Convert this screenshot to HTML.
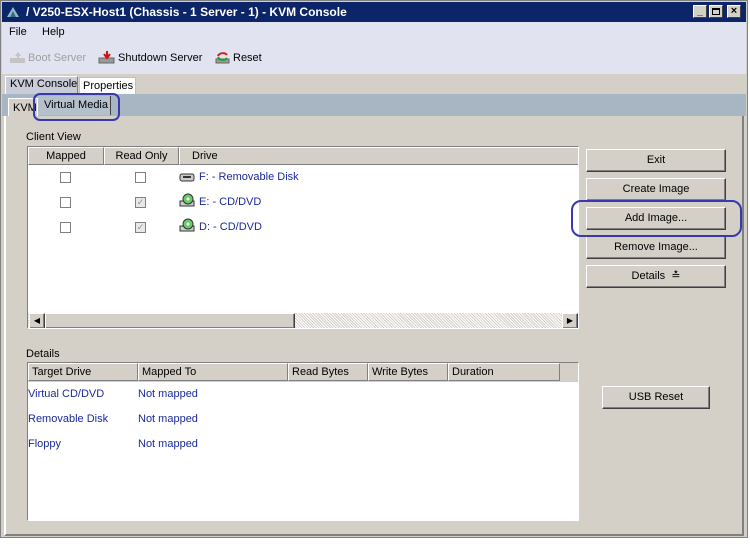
<!DOCTYPE html>
<html><head><meta charset="utf-8"><style>
*{box-sizing:border-box;margin:0;padding:0}
body{width:750px;height:544px;background:#fff;font-family:"Liberation Sans",sans-serif;font-size:11px;color:#000;position:relative;overflow:hidden;white-space:nowrap}
.a{position:absolute}
.btn{position:absolute;background:#d4d0c8;border:1px solid;border-color:#fff #404040 #404040 #fff;box-shadow:inset -1px -1px 0 #808080;text-align:center;line-height:20px;font-size:11px}
.hd{position:absolute;top:0;height:18px;background:#d4d0c8;border:1px solid;border-color:#fff #808080 #808080 #fff;line-height:16px;padding-left:3px}
.cb{position:absolute;width:11px;height:11px;border:1px solid #808080;background:#fff}
.blue{color:#1a2a9a}
</style></head><body>
<div class="a" style="left:0;top:0;width:748px;height:538px;background:#d4d0c8;border:1px solid #808080"></div>
<div class="a" style="left:2px;top:2px;width:744px;height:20px;background:#0c2468;color:#fff;font-weight:bold;font-size:12px;line-height:20px;padding-left:24px">/ V250-ESX-Host1 (Chassis - 1 Server - 1) - KVM Console</div>
<svg class="a" style="left:6px;top:6px" width="14" height="12"><path d="M7 1 L13 11 H1 Z" fill="#8fb8c8"/><path d="M7 5 L10 11 H4Z" fill="#3a6a8a"/></svg>
<div class="a" style="left:693px;top:5px;width:14px;height:13px;background:#d4d0c8;border:1px solid #fff;border-right-color:#404040;border-bottom-color:#404040;font-size:10px;font-weight:bold;line-height:12px;text-align:center">_</div>
<div class="a" style="left:709px;top:5px;width:14px;height:13px;background:#d4d0c8;border:1px solid #fff;border-right-color:#404040;border-bottom-color:#404040"><div style="margin:2px;width:8px;height:7px;border:1px solid #000;border-top-width:2px"></div></div>
<div class="a" style="left:727px;top:5px;width:14px;height:13px;background:#d4d0c8;border:1px solid #fff;border-right-color:#404040;border-bottom-color:#404040;font-size:11px;font-weight:bold;line-height:11px;text-align:center">×</div>
<div class="a" style="left:2px;top:22px;width:744px;height:52px;background:#e1e4f0"></div>
<div class="a" style="left:9px;top:26px;font-size:11px">File</div>
<div class="a" style="left:42px;top:26px;font-size:11px">Help</div>
<svg class="a" style="left:9px;top:51px" width="18" height="14"><rect x="1" y="7" width="15" height="5" fill="#c4c4c4"/><path d="M9 1 L12 5 H10 V8 H8 V5 H6Z" fill="#c4c4c4"/></svg>
<div class="a" style="left:28px;top:52px;color:#a0a0a0">Boot Server</div>
<svg class="a" style="left:98px;top:50px" width="18" height="15"><rect x="1" y="8" width="15" height="5" fill="#999" stroke="#666"/><path d="M9 1 V6 M6 4 L9 8 L12 4" stroke="#d01010" stroke-width="2" fill="none"/></svg>
<div class="a" style="left:118px;top:52px">Shutdown Server</div>
<svg class="a" style="left:214px;top:50px" width="18" height="15"><rect x="2" y="9" width="13" height="4" fill="#999" stroke="#666"/><path d="M4 6 A5 4 0 0 1 13 5" stroke="#d02020" stroke-width="2" fill="none"/><path d="M4 7 A5 4 0 0 0 13 8" stroke="#20a020" stroke-width="2" fill="none"/></svg>
<div class="a" style="left:233px;top:52px">Reset</div>
<div class="a" style="left:5px;top:76px;width:73px;height:18px;background:#c8ccd8;border:1px solid #fff;border-bottom:none;border-right-color:#808080;line-height:15px;padding-left:4px">KVM Console</div>
<div class="a" style="left:79px;top:77px;width:57px;height:18px;background:#fff;border:1px solid #c0c0c0;border-bottom:none;line-height:17px;padding-left:3px">Properties</div>
<div class="a" style="left:2px;top:94px;width:744px;height:22px;background:#a8b6c4"></div>
<div class="a" style="left:8px;top:98px;width:30px;height:18px;background:#d4d0c8;border:1px solid #fff;border-bottom:none;line-height:18px;padding-left:4px;overflow:hidden">KVM</div>
<div class="a" style="left:38px;top:96px;width:73px;height:19px;background:#b4c0cc;border-right:1px solid #404040;line-height:18px;padding-left:6px">Virtual Media</div>
<div class="a" style="left:33px;top:93px;width:87px;height:28px;border:2px solid #3838b0;border-radius:7px"></div>
<div class="a" style="left:4px;top:116px;width:740px;height:420px;border:2px solid;border-color:#fff #808080 #808080 #fff;border-top:none"></div>
<div class="a" style="left:26px;top:131px">Client View</div>
<div class="a" style="left:27px;top:146px;width:552px;height:183px;background:#fff;border:1px solid;border-color:#808080 #fff #fff #808080;overflow:hidden">
 <div class="hd" style="left:0;width:76px;text-align:center;padding:0">Mapped</div>
 <div class="hd" style="left:76px;width:75px;text-align:center;padding:0">Read Only</div>
 <div class="hd" style="left:151px;width:400px;padding-left:12px">Drive</div>
 <div class="a" style="left:0;top:166px;width:551px;height:16px;background:#e8e8e8 repeating-linear-gradient(45deg,#d4d0c8 0 1px,#fff 1px 2px)"></div>
 <div class="btn" style="left:1px;top:166px;width:16px;height:16px;line-height:14px;font-size:8px">◀</div>
 <div class="btn" style="left:17px;top:166px;width:250px;height:16px"></div>
 <div class="btn" style="left:534px;top:166px;width:16px;height:16px;line-height:14px;font-size:8px">▶</div>
</div>
<div class="cb" style="left:60px;top:172px"></div><div class="cb" style="left:135px;top:172px"></div>
<div class="cb" style="left:60px;top:197px"></div><div class="cb" style="left:135px;top:197px;background:#e8e8e8;color:#909090;font-size:9px;line-height:9px;text-align:center">✓</div>
<div class="cb" style="left:60px;top:222px"></div><div class="cb" style="left:135px;top:222px;background:#e8e8e8;color:#909090;font-size:9px;line-height:9px;text-align:center">✓</div>
<svg class="a" style="left:179px;top:172px" width="16" height="11"><rect x="1" y="2" width="14" height="7" rx="2" fill="#ccc" stroke="#333"/><rect x="4" y="4" width="8" height="2" fill="#333"/></svg>
<div class="a blue" style="left:199px;top:171px">F: - Removable Disk</div>
<svg class="a" style="left:179px;top:193px" width="16" height="15"><rect x="1" y="8" width="14" height="5" fill="#ccc" stroke="#333"/><circle cx="9" cy="6" r="5" fill="#6c6" stroke="#333"/><circle cx="9" cy="6" r="1.5" fill="#fff"/></svg>
<div class="a blue" style="left:199px;top:196px">E: - CD/DVD</div>
<svg class="a" style="left:179px;top:218px" width="16" height="15"><rect x="1" y="8" width="14" height="5" fill="#ccc" stroke="#333"/><circle cx="9" cy="6" r="5" fill="#6c6" stroke="#333"/><circle cx="9" cy="6" r="1.5" fill="#fff"/></svg>
<div class="a blue" style="left:199px;top:221px">D: - CD/DVD</div>
<div class="btn" style="left:586px;top:149px;width:140px;height:23px">Exit</div>
<div class="btn" style="left:586px;top:178px;width:140px;height:23px">Create Image</div>
<div class="btn" style="left:586px;top:207px;width:140px;height:23px">Add Image...</div>
<div class="btn" style="left:586px;top:236px;width:140px;height:23px">Remove Image...</div>
<div class="btn" style="left:586px;top:265px;width:140px;height:23px">Details &nbsp;≛</div>
<div class="a" style="left:571px;top:200px;width:171px;height:37px;border:2px solid #3838b0;border-radius:10px"></div>
<div class="a" style="left:26px;top:348px">Details</div>
<div class="a" style="left:27px;top:362px;width:552px;height:159px;background:#fff;border:1px solid;border-color:#808080 #fff #fff #808080;overflow:hidden">
 <div class="a" style="left:0;top:0;width:552px;height:19px;background:#d4d0c8"></div>
 <div class="hd" style="left:0;width:110px">Target Drive</div>
 <div class="hd" style="left:110px;width:150px">Mapped To</div>
 <div class="hd" style="left:260px;width:80px">Read Bytes</div>
 <div class="hd" style="left:340px;width:80px">Write Bytes</div>
 <div class="hd" style="left:420px;width:112px">Duration</div>
</div>
<div class="a blue" style="left:28px;top:388px">Virtual CD/DVD</div><div class="a blue" style="left:138px;top:388px">Not mapped</div>
<div class="a blue" style="left:28px;top:413px">Removable Disk</div><div class="a blue" style="left:138px;top:413px">Not mapped</div>
<div class="a blue" style="left:28px;top:438px">Floppy</div><div class="a blue" style="left:138px;top:438px">Not mapped</div>
<div class="btn" style="left:602px;top:386px;width:108px;height:23px">USB Reset</div>
</body></html>
